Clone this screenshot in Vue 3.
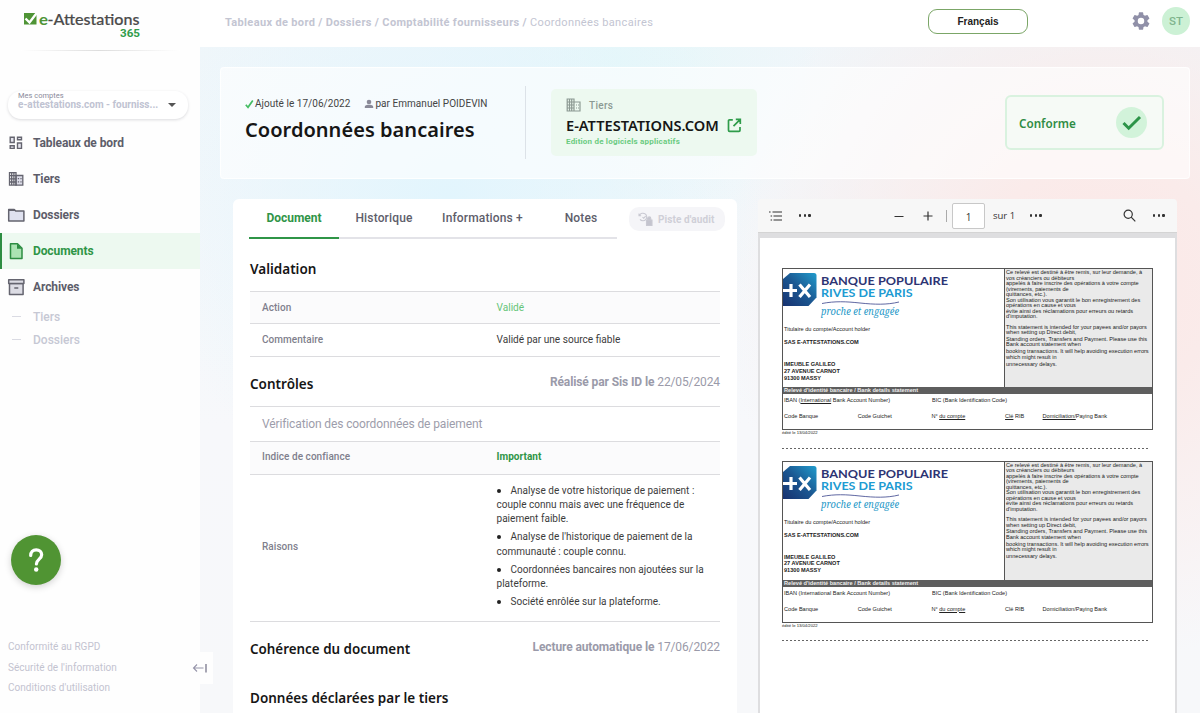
<template>
  <div class="app">
    <!-- Sidebar -->
    <aside class="sidebar">
      <div class="brand">
        <svg class="brand-logo" width="118" height="34" viewBox="0 -4 118 34">
          <path d="M0 1h12.500v11.500H0z" fill="#4f9436" />
          <path d="M1.500 6.500l4 4L13.500 0" fill="none" stroke="#fff" stroke-width="2.400" />
          <text x="15" y="13" class="brand-e" textLength="9" lengthAdjust="spacingAndGlyphs">e</text>
          <text x="23.500" y="13" class="brand-name" textLength="92" lengthAdjust="spacingAndGlyphs">-Attestations</text>
          <text x="96" y="25" class="brand-365" textLength="20" lengthAdjust="spacingAndGlyphs">365</text>
        </svg>
      </div>
      <div class="brand-line"></div>

      <div class="account">
        <div class="account-text">
          <small>Mes comptes</small>
          <b>e-attestations.com - fourniss...</b>
        </div>
        <span class="caret"></span>
      </div>

      <nav class="menu">
        <a v-for="item in menu" :key="item.label" class="menu-item" :class="{ active: item.active }">
          <svg v-if="item.icon === 'dash'" width="18" height="18" viewBox="0 0 18 18" fill="#e6e6ef" stroke="#64646f" stroke-width="1.400">
            <path d="M3.200 3.200h4v5.300h-4zM10.500 3.200h4v2.600h-4zM3.200 11.800h4v2.600h-4zM10.500 9h4v5.400h-4z" />
          </svg>
          <svg v-else-if="item.icon === 'tiers'" width="18" height="18" viewBox="0 0 18 18" fill="none" stroke="#64646f" stroke-width="1.300">
            <path d="M9 5.500h6.800v9.600H9z" fill="#dcdce8" />
            <path d="M2.500 2.600H9v12.500H2.500zM2.500 5.700H9M2.500 8.900H9M2.500 12H9M4.700 2.600v12.500M6.900 2.600v12.500" />
            <path d="M10.800 8.700h1.300m1.300 0h1.200m-3.800 3.200h1.300m1.300 0h1.200" />
          </svg>
          <svg v-else-if="item.icon === 'folder'" width="18" height="18" viewBox="0 0 18 18">
            <path d="M1.700 3.400h5.500l1.500 1.700h8.200v10H1.700z" fill="#dfe1ef" stroke="#64646f" stroke-width="1.500" stroke-linejoin="round" />
            <path d="M1.700 3h5.600l1.500 2H1.700z" fill="#64646f" />
          </svg>
          <svg v-else-if="item.icon === 'doc'" width="18" height="18" viewBox="0 0 18 18">
            <path d="M3.500 1.700h7l4.500 4.500v10.200H3.500z" fill="#abe3b3" stroke="#2d8d42" stroke-width="1.500" stroke-linejoin="round" />
            <path d="M10 1.700v5h5z" fill="#2d8d42" />
          </svg>
          <svg v-else width="18" height="18" viewBox="0 0 18 18" fill="#dcdce4" stroke="#64646f" stroke-width="1.500" stroke-linejoin="round">
            <path d="M2.500 5.500h13.600v11H2.500z" />
            <path d="M1.700 1.700h15.200v3.800H1.700zM7.300 10h4" />
          </svg>
          <span>{{ item.label }}</span>
        </a>
        <a v-for="sub in ['Tiers', 'Dossiers']" :key="sub" class="sub-item"><i></i><span>{{ sub }}</span></a>
      </nav>

      <button class="help">
        <svg width="50" height="50" viewBox="0 0 50 50" fill="none">
          <path d="M19.700 20.500c0-3.400 2.200-5.700 5.500-5.700 3.200 0 5.500 2 5.500 5 0 4.200-5.300 4.500-5.300 9.200" stroke="#fff" stroke-width="3.200" stroke-linecap="round" />
          <circle cx="25.200" cy="34.500" r="2.200" fill="#fff" />
        </svg>
      </button>

      <div class="legal">
        <a>Conformité au RGPD</a>
        <a>Sécurité de l'information</a>
        <a>Conditions d'utilisation</a>
      </div>
      <div class="collapse">
        <svg width="16" height="12" viewBox="0 0 16 12" fill="none" stroke="#9695aa" stroke-width="1.100">
          <path d="M11.500 6H1.500M5 2.500L1.500 6 5 9.500" />
          <path d="M14 2v8.500" stroke="#77768b" stroke-width="1.300" />
        </svg>
      </div>
    </aside>

    <div class="main">
      <!-- Top bar -->
      <header class="topbar">
        <div class="crumbs"><b>Tableaux de bord / Dossiers / Comptabilité fournisseurs /</b> Coordonnées bancaires</div>
        <button class="lang">Français</button>
        <svg class="gear" width="18" height="18" viewBox="2 2 20 20" fill="#9090a8">
          <path d="M19.140 12.940c.040-.300.060-.610.060-.940s-.020-.640-.070-.940l2.030-1.580a.49.49 0 0 0 .120-.610l-1.920-3.320a.49.49 0 0 0-.590-.220l-2.390.960a7 7 0 0 0-1.620-.940l-.360-2.540A.48.48 0 0 0 13.920 2.400h-3.840a.47.47 0 0 0-.470.410l-.360 2.540c-.590.240-1.130.570-1.620.940l-2.390-.960a.48.48 0 0 0-.590.220L2.740 8.870a.47.47 0 0 0 .120.610l2.030 1.580a6 6 0 0 0 0 1.880l-2.030 1.580a.49.49 0 0 0-.120.610l1.920 3.320c.120.220.370.290.590.220l2.390-.960c.500.380 1.030.700 1.620.940l.360 2.540c.050.240.240.410.480.410h3.840c.240 0 .440-.170.470-.410l.360-2.540a7 7 0 0 0 1.620-.940l2.390.960c.220.080.470 0 .590-.220l1.920-3.320a.47.47 0 0 0-.120-.610zM12 15.600a3.600 3.600 0 1 1 0-7.200 3.600 3.600 0 0 1 0 7.200z" />
        </svg>
        <span class="avatar">ST</span>
      </header>

      <!-- Document summary -->
      <section class="hero">
        <div class="hero-title">
          <p class="meta">
            <svg width="9" height="10" viewBox="0 0 9 10" fill="none" stroke="#45bd63" stroke-width="1.700"><path d="M.8 5.800L3 8.300 7.800 1.500" /></svg>
            <span class="added">Ajouté le 17/06/2022</span>
            <svg width="10" height="10" viewBox="0 0 10 10" fill="#8a8a98"><circle cx="5" cy="3" r="2.300" /><path d="M.8 9V7.800C.8 6.200 3 5.800 5 5.800s4.200.4 4.200 2V9z" /></svg>
            <span>par Emmanuel POIDEVIN</span>
          </p>
          <h1><span>Coordonnées bancaires</span></h1>
        </div>
        <div class="third">
          <p class="third-label">
            <svg width="16" height="14" viewBox="0 0 16 14" fill="none" stroke="#8c9a93" stroke-width="1.200">
              <path d="M1.200 1H8v12H1.200zM1.200 4H8M1.200 7H8M1.200 10H8M3.500 1v12M5.700 1v12M8 4h6v9H8M10 7h1m1 0h1m-3 3h1m1 0h1" />
            </svg>
            <span>Tiers</span>
          </p>
          <p class="third-name">
            <span>E-ATTESTATIONS.COM</span>
            <svg width="15" height="15" viewBox="0 0 15 15" fill="none" stroke="#2f9c4a" stroke-width="1.700">
              <path d="M5.800 1.800H2.500a1 1 0 0 0-1 1v9.500a1 1 0 0 0 1 1h9.500a1 1 0 0 0 1-1V9M6.500 8.200l6-6M8.800 1.400h4.500v4.500" />
            </svg>
          </p>
          <p class="third-sector">Edition de logiciels applicatifs</p>
        </div>
        <div class="status">
          <b>Conforme</b>
          <span class="status-dot">
            <svg width="20" height="16" viewBox="0 0 20 16" fill="none" stroke="#2c9448" stroke-width="3"><path d="M1.500 8l5.200 5.200L18 2" /></svg>
          </span>
        </div>
      </section>

      <div class="content">
        <!-- Details panel -->
        <section class="panel">
          <div class="tabs">
            <a class="tab on">Document</a>
            <a class="tab">Historique</a>
            <a class="tab wide">Informations +</a>
            <a class="tab notes">Notes</a>
            <span class="audit">
              <svg width="16" height="15" viewBox="0 0 16 15" fill="none" stroke="#c9c9d2" stroke-width="1.100">
                <path d="M1.600 3.200a3.800 3.800 0 1 1 .4 4.200M1 1.500v2.200h2.200M4.500 5.200l1.200 1 2-2" />
                <path d="M8.500 8h5.500v5.500H8.500zM9.600 8V6.500a1.600 1.600 0 0 1 3.200 0V8" fill="#c4c4ce" />
              </svg>
              Piste d'audit
            </span>
          </div>

          <div class="heading first"><h2>Validation</h2></div>
          <dl class="rows">
            <div class="row tint action"><dt>Action</dt><dd class="ok">Validé</dd></div>
            <div class="row comment"><dt>Commentaire</dt><dd>Validé par une source fiable</dd></div>
          </dl>

          <div class="heading controls"><h2>Contrôles</h2><p class="real"><b>Réalisé par Sis ID le</b> 22/05/2024</p></div>
          <dl class="rows">
            <div class="row caption">Vérification des coordonnées de paiement</div>
            <div class="row tint"><dt>Indice de confiance</dt><dd class="strong">Important</dd></div>
            <div class="row reasons">
              <dt>Raisons</dt>
              <dd>
                <ul>
                  <li v-for="reason in reasons" :key="reason[0]">
                    <i></i><template v-for="(line, n) in reason" :key="n"><br v-if="n" />{{ line }}</template>
                  </li>
                </ul>
              </dd>
            </div>
          </dl>

          <div class="heading coherence"><h2>Cohérence du document</h2><p class="auto"><b>Lecture automatique le</b> 17/06/2022</p></div>
          <div class="heading declared"><h2>Données déclarées par le tiers</h2></div>
        </section>

        <!-- PDF viewer -->
        <section class="viewer">
          <div class="toolbar">
            <svg class="ic" width="14" height="12" viewBox="0 0 14 12" stroke="#333" stroke-width="1.200"><path d="M3.500 2H13M4.500 6H13M4.500 10H13M0 2h1.600M1.600 6h1.500M1.600 10h1.500" /></svg>
            <span class="dots"><i></i><i></i><i></i></span>
            <svg class="minus" width="10" height="10" viewBox="0 0 10 10" stroke="#333"><path d="M.5 5.500h9" /></svg>
            <svg class="plus" width="10" height="10" viewBox="0 0 10 10" stroke="#333" stroke-width="1.200"><path d="M.5 5h9M5 .5v9" /></svg>
            <span class="sep"></span>
            <span class="page-no">1</span>
            <span class="page-of">sur 1</span>
            <span class="dots"><i></i><i></i><i></i></span>
            <svg class="search" width="13" height="13" viewBox="0 0 13 13" fill="none" stroke="#333" stroke-width="1.200"><circle cx="5.200" cy="5.200" r="4.100" /><path d="M8.200 8.200l4.100 4.100" /></svg>
            <span class="dots"><i></i><i></i><i></i></span>
          </div>
          <div class="paper-wrap">
            <div class="paper">
              <article v-for="n in 2" :key="n" class="rib">
                <div class="rib-box">
                  <div class="rib-top">
                    <div class="rib-left">
                      <svg class="bank" width="170" height="52" viewBox="0 0 170 52">
                        <defs>
                          <linearGradient id="bankBlue" x1="0" y1="1" x2="1" y2="0">
                            <stop offset="0" stop-color="#17316f" />
                            <stop offset=".5" stop-color="#1b5791" />
                            <stop offset="1" stop-color="#219ccd" />
                          </linearGradient>
                        </defs>
                        <path d="M7 4h24q2.500 0 2.500 2.500v22l-8 8.500H0V10z" fill="url(#bankBlue)" />
                        <path d="M0 21.500h14M8 15v13M16.500 15.500l10.500 12.500M27 15.500L16.500 28" stroke="#fff" stroke-width="3.200" />
                        <text x="38" y="16.200" class="bank-a" textLength="127" lengthAdjust="spacingAndGlyphs">BANQUE POPULAIRE</text>
                        <text x="38" y="28" class="bank-b" textLength="91.500" lengthAdjust="spacingAndGlyphs">RIVES DE PARIS</text>
                        <path d="M39 34.500c13-2.500 24-2 38-.5s27 2 39-1" fill="none" stroke="#4e5797" stroke-width=".9" />
                        <text x="38" y="46" class="bank-c" textLength="78" lengthAdjust="spacingAndGlyphs">proche et engagée</text>
                      </svg>
                      <p class="holder">Titulaire du compte/Account holder</p>
                      <p class="company">SAS E-ATTESTATIONS.COM</p>
                      <p class="address">IMEUBLE GALILEO<br />27 AVENUE CARNOT<br />91300 MASSY</p>
                    </div>
                    <div class="rib-right">
                      <p v-for="(block, k) in notice" :key="k">
                        <template v-for="(line, m) in block" :key="m"><br v-if="m" />{{ line }}</template>
                      </p>
                    </div>
                  </div>
                  <div class="rib-bar">Relevé d'identité bancaire / Bank details statement</div>
                  <div class="rib-codes">
                    <span class="iban">IBAN (<u v-if="n === 1">International</u><template v-else>International</template> Bank Account Number)</span>
                    <span class="bic">BIC (Bank Identification Code)</span>
                  </div>
                  <div class="rib-codes low">
                    <span>Code Banque</span><span>Code Guichet</span><span>N° <u>du compte</u></span><span><u v-if="n === 1">Clé</u><template v-else>Clé</template> RIB</span><span><u v-if="n === 1">Domiciliation/</u><template v-else>Domiciliation/</template>Paying Bank</span>
                  </div>
                </div>
                <p class="edited">édité le 13/04/2022</p>
                <div class="cut"></div>
              </article>
            </div>
          </div>
        </section>
      </div>
    </div>
  </div>
</template>

<script setup>
const menu = [
  { label: 'Tableaux de bord', icon: 'dash' },
  { label: 'Tiers', icon: 'tiers' },
  { label: 'Dossiers', icon: 'folder' },
  { label: 'Documents', icon: 'doc', active: true },
  { label: 'Archives', icon: 'archive' }
];

// One array entry per displayed line
const reasons = [
  ['Analyse de votre historique de paiement :', 'couple connu mais avec une fréquence de', 'paiement faible.'],
  ["Analyse de l'historique de paiement de la", 'communauté : couple connu.'],
  ['Coordonnées bancaires non ajoutées sur la', 'plateforme.'],
  ['Société enrôlée sur la plateforme.']
];

const notice = [
  [
    'Ce relevé est destiné à être remis, sur leur demande, à',
    'vos créanciers ou débiteurs',
    'appelés à faire inscrire des opérations à votre compte',
    '(virements, paiements de',
    'quittances, etc.).',
    'Son utilisation vous garantit le bon enregistrement des',
    'opérations en cause et vous',
    'évite ainsi des réclamations pour erreurs ou retards',
    "d'imputation."
  ],
  ['This statement is intended for your payees and/or payors', 'when setting up Direct debit,'],
  ['Standing orders, Transfers and Payment. Please use this', 'Bank account statement when'],
  ['booking transactions. It will help avoiding execution errors', 'which might result in'],
  ['unnecessary delays.']
];
</script>

<style>
body {
  overflow: hidden;
}
</style>

<style scoped>
* {
  box-sizing: border-box;
}
p,
h1,
h2,
dl,
dd,
ul {
  margin: 0;
  padding: 0;
}
svg {
  display: block;
  flex: none;
}
.app {
  display: flex;
  width: 1200px;
  height: 713px;
  overflow: hidden;
  font-family: Roboto, sans-serif;
  white-space: nowrap;
  color: #333;
}

/* sidebar */
.sidebar {
  position: relative;
  z-index: 1;
  display: flex;
  flex-direction: column;
  flex: none;
  width: 200px;
  background: #fefefe;
}
.brand {
  padding: 8px 0 0 24px;
  height: 50px;
}
.brand-e,
.brand-name {
  font: 500 16px Lato, sans-serif;
  fill: #4f9436;
}
.brand-e {
  font-weight: 700;
}
.brand-name {
  fill: #4b4b4b;
  stroke: #4b4b4b;
  stroke-width: 0.2px;
}
.brand-365 {
  font: 700 11px Roboto, sans-serif;
  fill: #2f9c4a;
}
.brand-line {
  height: 1px;
  margin: 0 20px;
  background: linear-gradient(90deg, #fff, #ddd, #fff);
}
.account {
  display: flex;
  align-items: center;
  margin: 40px 12px 0 8px;
  height: 28px;
  padding: 0 12px 0 10px;
  border-radius: 13px;
  background: #fff;
  box-shadow: 0 1px 3px rgba(60, 60, 80, 0.18);
}
.account-text {
  flex: 1;
  display: flex;
  flex-direction: column;
  margin-top: -9px;
}
.account small {
  font-size: 7.500px;
  line-height: 9px;
  color: #8b8b9b;
}
.account b {
  font-size: 10px;
  line-height: 10px;
  color: #c0c3d2;
}
.caret {
  border: 4.500px solid transparent;
  border-top-color: #555;
  border-bottom: 0;
}
.menu {
  display: flex;
  flex-direction: column;
  margin-top: 6px;
}
.menu-item {
  display: flex;
  align-items: center;
  gap: 8px;
  height: 36px;
  padding-left: 7px;
  font-size: 12px;
  font-weight: 700;
  letter-spacing: -0.1px;
  color: #5d5d6a;
}
.menu-item.active {
  padding-left: 5px;
  border-left: 2px solid #2d8d42;
  background: #edf9f0;
  color: #2f9547;
}
.sub-item {
  display: flex;
  align-items: center;
  gap: 12px;
  height: 23px;
  padding-left: 12px;
  font-size: 12px;
  font-weight: 500;
  letter-spacing: 0;
  color: #c6c8d4;
}
.sub-item i {
  width: 9px;
  height: 1px;
  background: #dadbe3;
}
.help {
  width: 50px;
  height: 50px;
  margin: 184px 0 0 11px;
  padding: 0;
  border: 0;
  border-radius: 50%;
  background: #509433;
  box-shadow: 0 2px 7px rgba(0, 0, 0, 0.18);
}
.legal {
  display: flex;
  flex-direction: column;
  margin: 52px 0 0 8px;
  font-size: 10px;
  line-height: 20.500px;
  letter-spacing: 0.03px;
  color: #c3c3d0;
}
.collapse {
  position: absolute;
  left: 187px;
  top: 652px;
  width: 26px;
  height: 32px;
  padding: 10px 0 0 5px;
  background: #fefefe;
}

/* main area */
.main {
  display: flex;
  flex-direction: column;
  flex: none;
  width: 1000px;
  background: radial-gradient(circle at 250px 200px, #e2f5fd 0, rgba(228, 246, 253, 0) 310px),
    radial-gradient(circle at 420px 60px, #e6f7f9 0, rgba(230, 247, 249, 0) 200px),
    radial-gradient(circle at 900px 280px, #fce8e7 0, #faebea 120px, rgba(250, 236, 235, 0) 380px),
    linear-gradient(180deg, #eff6fa 0, #f7f8fb 60%, #f7f8fa 100%);
}
.topbar {
  display: flex;
  align-items: center;
  flex: none;
  height: 47px;
  padding: 0 10px 5px 25px;
  background: #fff;
}
.crumbs {
  width: 703px;
  font-size: 11px;
  letter-spacing: 0.345px;
  padding-top: 3px;
  color: #c3c5d2;
}
.lang {
  width: 100px;
  height: 25px;
  padding: 0;
  border: 1px solid #7ba667;
  border-radius: 9px;
  background: #fff;
  font: 700 10px 'Liberation Sans', sans-serif;
  letter-spacing: 0;
  color: #222;
}
.gear {
  margin-left: auto;
}
.avatar {
  width: 28px;
  height: 28px;
  margin-left: 12px;
  border-radius: 50%;
  background: #ccf1d5;
  text-align: center;
  font-size: 11.500px;
  font-weight: 500;
  line-height: 29px;
  color: #80b58d;
}
.hero {
  display: flex;
  flex: none;
  margin: 20px 10px 0 20px;
  height: 112px;
  padding: 18px 25px 0 24px;
  border: 1px solid rgba(255, 255, 255, 0.8);
  border-radius: 4px;
  background: rgba(255, 255, 255, 0.6);
}
.hero-title {
  width: 281px;
  height: 73px;
  border-right: 1px solid #dce2e8;
}
.meta {
  display: flex;
  align-items: center;
  gap: 1px;
  margin-top: 12px;
  font-size: 10px;
  line-height: 12px;
  letter-spacing: 0.04px;
  color: #444;
}
.added {
  margin-right: 13px;
}
h1,
h2,
.third-name,
.status b {
  font-family: 'Noto Sans', 'Open Sans', sans-serif;
  font-weight: 600;
  color: #161616;
}
h1 {
  margin-top: 5px;
  font-size: 20px;
  line-height: 30px;
  letter-spacing: 0.04px;
}
.third {
  width: 206px;
  height: 67px;
  margin: 3px 0 0 25px;
  padding: 8px 14px 0 15px;
  border-radius: 5px;
  background: #edf9f0;
}
.third-label {
  display: flex;
  align-items: center;
  gap: 7px;
  height: 16px;
  font-size: 10px;
  font-weight: 500;
  letter-spacing: 0.3px;
  color: #8c9a93;
}
.third-name {
  display: flex;
  align-items: center;
  gap: 8px;
  height: 24px;
  font-size: 14.600px;
}
.third-sector {
  font-size: 8px;
  font-weight: 700;
  line-height: 9px;
  letter-spacing: 0.2px;
  color: #6acb80;
}
.status {
  display: flex;
  align-items: center;
  justify-content: space-between;
  width: 159px;
  height: 55px;
  margin: 9px 0 0 auto;
  padding: 0 15px 0 12px;
  border: 2px solid #d9f2df;
  border-radius: 6px;
  background: #f6faf6;
}
.status b {
  font-size: 11.700px;
  color: #2f8c45;
}
.status-dot {
  display: flex;
  align-items: center;
  justify-content: center;
  width: 31px;
  height: 31px;
  border-radius: 50%;
  background: #d2f3da;
}
.content {
  display: flex;
  align-items: flex-start;
  gap: 21px;
  padding: 20px 0 0 33px;
}

/* details panel */
.panel {
  width: 504px;
  height: 530px;
  padding: 0 17px;
  border-radius: 6px;
  background: #fff;
}
.tabs {
  display: flex;
  height: 40px;
  margin-left: -1px;
}
.tab {
  flex: none;
  width: 90px;
  border-bottom: 2px solid #e3e3e8;
  text-align: center;
  font-size: 12px;
  font-weight: 500;
  letter-spacing: 0.15px;
  line-height: 38px;
  color: #5e5e6b;
}
.tab.on {
  border-bottom: 2px solid #2f9547;
  font-weight: 700;
  letter-spacing: 0;
  color: #2f9547;
}
.tab.wide {
  width: 107px;
}
.tab.notes {
  width: 81px;
  padding-left: 9px;
}
.audit {
  display: flex;
  align-items: center;
  flex: none;
  gap: 4px;
  width: 96px;
  height: 24px;
  margin: 8px 0 0 12px;
  padding-left: 9px;
  border-radius: 10px;
  background: #f5f5f8;
  font-size: 10px;
  font-weight: 700;
  letter-spacing: 0.1px;
  color: #cfcfd7;
}
.heading {
  display: flex;
  justify-content: space-between;
}
.heading h2 {
  font-size: 13.500px;
  line-height: 20px;
}
.heading p {
  font-size: 12px;
  line-height: 17px;
  letter-spacing: -0.11px;
  color: #9a9aa9;
}
.first {
  height: 52px;
  padding-top: 20px;
}
.controls {
  height: 49px;
  padding-top: 17px;
}
.coherence {
  height: 66px;
  padding-top: 17px;
}
.coherence h2 {
  font-size: 13.400px;
}
.row {
  display: flex;
  align-items: center;
  height: 33px;
  padding-left: 12px;
  border-bottom: 1px solid #dcdcdf;
  font-size: 10.100px;
}
.rows {
  border-top: 1px solid #dcdcdf;
}
.row.tint {
  padding-bottom: 3px;
  background: #fbfbfc;
}
.row.action {
  height: 32px;
  padding-bottom: 1px;
}
.row.comment {
  padding-bottom: 1px;
}
.row dt {
  width: 234.500px;
  font-size: 10px;
  font-weight: 500;
  letter-spacing: 0.05px;
  color: #7f7f8d;
}
.row dd {
  color: #3c3c3c;
}
.row dd.ok {
  color: #65c578;
}
.row dd.strong {
  font-size: 10px;
  font-weight: 700;
  letter-spacing: 0.05px;
  color: #2f9547;
}
.row.caption {
  height: 35px;
  font-size: 12px;
  letter-spacing: -0.12px;
  color: #9d9dab;
}
.row.reasons {
  height: 147px;
}
.row.reasons dt,
.row.reasons dd {
  margin-bottom: 3px;
}
.row.reasons dd {
  font-size: 10px;
  letter-spacing: 0.03px;
}
ul {
  list-style: none;
}
li {
  line-height: 14.100px;
  margin-bottom: 3.900px;
}
li:last-child {
  margin-bottom: 0;
}
li i {
  display: inline-block;
  width: 4px;
  height: 4px;
  margin-right: 10px;
  border-radius: 50%;
  background: #222;
  vertical-align: 1px;
}

/* pdf viewer */
.viewer {
  width: 419px;
  height: 530px;
}
.toolbar {
  display: flex;
  align-items: center;
  height: 33px;
  padding: 0 12px 0 11px;
  border-radius: 4px 4px 0 0;
  background: #f7f7f7;
}
.dots {
  display: flex;
  gap: 2.500px;
  width: 12px;
}
.dots i {
  width: 2.200px;
  height: 2.200px;
  border-radius: 50%;
  background: #333;
}
.ic {
  margin-right: 16px;
}
.minus {
  margin-left: 83px;
}
.plus {
  margin-left: 19px;
}
.sep {
  width: 1px;
  height: 12px;
  margin: 0 5px 0 13px;
  background: #aaa;
}
.page-no {
  width: 33px;
  height: 26px;
  border: 1px solid #c8c8c8;
  border-radius: 2px;
  background: #fff;
  text-align: center;
  font: 10px/26px 'Open Sans', sans-serif;
}
.page-of {
  margin: 0 15px 0 8px;
  width: 22px;
  font: 9.500px 'Open Sans', sans-serif;
}
.search {
  margin: 0 17px 0 auto;
}
.paper-wrap {
  padding: 5px 2px 0;
  border-top: 1px solid #d4d4d4;
  background: #dedee0;
}
.paper {
  height: 500px;
  padding: 30px 22px 0;
  background: #fff;
}
.rib {
  height: 192.500px;
  font-family: 'Liberation Sans', sans-serif;
  font-size: 5.580px;
  color: #222;
}
.rib-box {
  height: 162px;
  border: 1px solid #555;
}
.rib-top {
  display: flex;
  height: 118px;
}
.rib-left {
  width: 221px;
}
.bank-a,
.bank-b {
  font: 700 11.500px Lato, sans-serif;
  fill: #2d3473;
}
.bank-b {
  fill: #209bd2;
}
.bank-c {
  font: italic 11px 'Noto Serif', 'Liberation Serif', serif;
  fill: #2799c8;
}
.holder {
  padding: 5px 0 0 1px;
  line-height: 7px;
}
.company {
  padding: 6px 0 0 1px;
  line-height: 7px;
  font-weight: 700;
}
.address {
  padding: 15px 0 0 1px;
  line-height: 6.800px;
  font-weight: 700;
}
.rib-right {
  flex: 1;
  padding: 1px 0 0 1px;
  border-left: 1px solid #555;
  background: #eaeaea;
  line-height: 5.550px;
}
.rib-right p {
  margin-bottom: 1.300px;
}
.rib-right p:first-child {
  margin-bottom: 4.600px;
}
.rib-bar {
  height: 7px;
  padding-left: 1px;
  background: #5e5e5e;
  font-weight: 700;
  line-height: 7px;
  color: #eee;
}
.rib-codes {
  display: flex;
  height: 16px;
  padding: 2px 0 0 1px;
  line-height: 8px;
}
.iban {
  width: 148px;
}
.low span {
  width: 73.700px;
}
.low span:nth-child(4) {
  width: 37.500px;
}
.edited {
  font-size: 4.200px;
  line-height: 5px;
}
.cut {
  height: 1px;
  margin-top: 12.500px;
  margin-right: 3px;
  background: repeating-linear-gradient(90deg, #666 0 2px, transparent 2px 4px);
}
</style>
